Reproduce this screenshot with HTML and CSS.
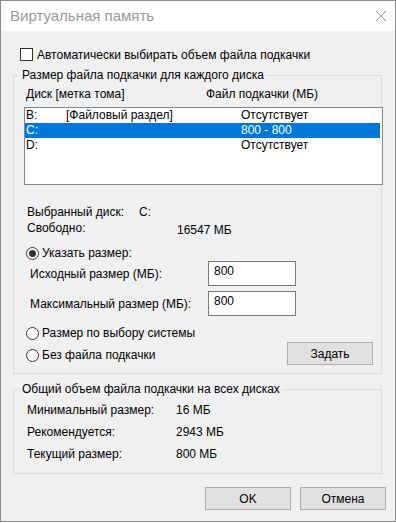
FILE: index.html
```html
<!DOCTYPE html>
<html lang="ru">
<head>
    <meta charset="UTF-8">
    <title>Виртуальная память</title>
    <link rel="stylesheet" href="styles.css">
</head>
<body>

    <div class="window">
        <div class="titlebar">
            <span class="title">Виртуальная память</span>
            <svg class="close" width="12" height="12" viewBox="0 0 12 12">
                <path d="M1 1 L11 11 M11 1 L1 11" stroke="#999" stroke-width="1" fill="none"/>
            </svg>
        </div>

        <div class="content">
            <div class="check-row">
                <span class="checkbox"></span>
                <span>Автоматически выбирать объем файла подкачки</span>
            </div>

            <fieldset class="group group-disks">
                <legend>Размер файла подкачки для каждого диска</legend>

                <div class="list-head">
                    <span class="head-drive">Диск [метка тома]</span>
                    <span>Файл подкачки (МБ)</span>
                </div>

                <div class="listbox">
                    <div class="list-row">
                        <span class="col-drive">B:</span>
                        <span class="col-label">[Файловый раздел]</span>
                        <span>Отсутствует</span>
                    </div>
                    <div class="list-row selected">
                        <span class="col-drive">C:</span>
                        <span class="col-label"></span>
                        <span>800 - 800</span>
                    </div>
                    <div class="list-row">
                        <span class="col-drive">D:</span>
                        <span class="col-label"></span>
                        <span>Отсутствует</span>
                    </div>
                </div>

                <div class="disk-info">
                    <span>Выбранный диск:</span>
                    <span>C:</span>
                    <span>Свободно:</span>
                    <span class="free-value">16547 МБ</span>
                </div>

                <div class="radio-row first">
                    <span class="radio checked"></span>
                    <span>Указать размер:</span>
                </div>

                <div class="field-row">
                    <span>Исходный размер (МБ):</span>
                    <span class="textbox">800</span>
                </div>
                <div class="field-row">
                    <span>Максимальный размер (МБ):</span>
                    <span class="textbox">800</span>
                </div>

                <div class="radio-row system">
                    <span class="radio"></span>
                    <span>Размер по выбору системы</span>
                </div>

                <div class="last-row">
                    <div class="radio-row">
                        <span class="radio"></span>
                        <span>Без файла подкачки</span>
                    </div>
                    <button class="btn">Задать</button>
                </div>
            </fieldset>

            <fieldset class="group group-total">
                <legend>Общий объем файла подкачки на всех дисках</legend>
                <div class="totals">
                    <span>Минимальный размер:</span>
                    <span>16 МБ</span>
                    <span>Рекомендуется:</span>
                    <span>2943 МБ</span>
                    <span>Текущий размер:</span>
                    <span>800 МБ</span>
                </div>
            </fieldset>

            <div class="dialog-buttons">
                <button class="btn">OK</button>
                <button class="btn">Отмена</button>
            </div>
        </div>
    </div>

</body>
</html>
```

FILE: styles.css
```css
/* Reset */
* {
    margin: 0;
    padding: 0;
    box-sizing: border-box;
}

body {
    font-family: 'Liberation Sans', Arial, sans-serif;
    font-size: 12px;
    line-height: 16px;
    color: #000;
    background-color: #fff;
}

/* Window frame */
.window {
    width: 396px;
    height: 522px;
    border: 1px solid #8c8c8c;
    display: flex;
    flex-direction: column;
}

.titlebar {
    height: 30px;
    background-color: #fff;
    display: flex;
    align-items: center;
    justify-content: space-between;
    padding: 0 8px 0 9px;
}

.title {
    font-size: 15px;
    color: #999;
}

.close {
    display: block;
}

.content {
    flex: 1;
    background-color: #f0f0f0;
    padding: 17px 9px 0 12px;
}

/* Checkbox line */
.check-row {
    display: flex;
    align-items: center;
    gap: 4px;
    margin-left: 7px;
    height: 13px;
}

.checkbox {
    width: 13px;
    height: 13px;
    border: 1px solid #333;
    background-color: #fff;
}

/* Group boxes */
.group {
    border: 1px solid #dcdcdc;
    margin-right: 4px;
    min-width: 0;
}

.group legend {
    margin-left: 6px;
    padding: 0 2px;
    line-height: 16px;
}

.group-disks {
    margin-top: 6px;
    padding: 0 0 8px 0;
}

.list-head {
    display: flex;
    margin: 3px 0 0 12px;
}

.head-drive {
    width: 180px;
}

.listbox {
    margin: 5px -2px 0 10px;
    height: 78px;
    border: 1px solid #828790;
    background-color: #fff;
    padding: 0 2px 0 0;
}

.list-row {
    display: flex;
    height: 15px;
    line-height: 15px;
    padding-left: 1px;
}

.list-row.selected {
    background-color: #0078d7;
    color: #fff;
}

.col-drive {
    width: 40px;
}

.col-label {
    width: 175px;
}

.disk-info {
    display: grid;
    grid-template-columns: 112px 38px auto;
    margin: 19px 0 0 13px;
}

.disk-info span:nth-child(2) {
    grid-column: 2 / 4;
}

.disk-info .free-value {
    grid-column: 3;
    padding-top: 2px;
}

/* Radio buttons */
.radio-row {
    display: flex;
    align-items: center;
    gap: 3px;
    margin-left: 12px;
}

.radio-row.first {
    margin-top: 7px;
}

.radio-row.system {
    margin-top: 9px;
}

.radio {
    width: 13px;
    height: 13px;
    border: 1px solid #333;
    border-radius: 50%;
    background-color: #fff;
    display: flex;
    align-items: center;
    justify-content: center;
}

.radio.checked::after {
    content: '';
    width: 7px;
    height: 7px;
    border-radius: 50%;
    background-color: #333;
}

/* Size inputs */
.field-row {
    display: flex;
    align-items: center;
    margin: 0 0 0 16px;
    height: 25px;
}

.field-row + .field-row {
    margin-top: 5px;
}

.field-row > span:first-child {
    width: 178px;
}

.textbox {
    width: 88px;
    height: 25px;
    border: 1px solid #7a7a7a;
    background-color: #fff;
    padding: 1px 0 0 5px;
}

.last-row {
    display: flex;
    align-items: center;
    justify-content: space-between;
    margin-top: 1px;
    padding-right: 8px;
}

.last-row .radio-row {
    margin-top: 3px;
}

/* Buttons */
.btn {
    font-family: inherit;
    font-size: 12px;
    color: #000;
    background-color: #e1e1e1;
    border: 1px solid #adadad;
    width: 86px;
    height: 23px;
}

/* Totals group */
.group-total {
    margin-top: 7px;
    padding: 0 0 11px 0;
}

.totals {
    display: grid;
    grid-template-columns: 149px auto;
    row-gap: 6px;
    margin: 5px 0 0 13px;
}

.dialog-buttons {
    display: flex;
    justify-content: flex-end;
    gap: 9px;
    margin-top: 13px;
}
```
